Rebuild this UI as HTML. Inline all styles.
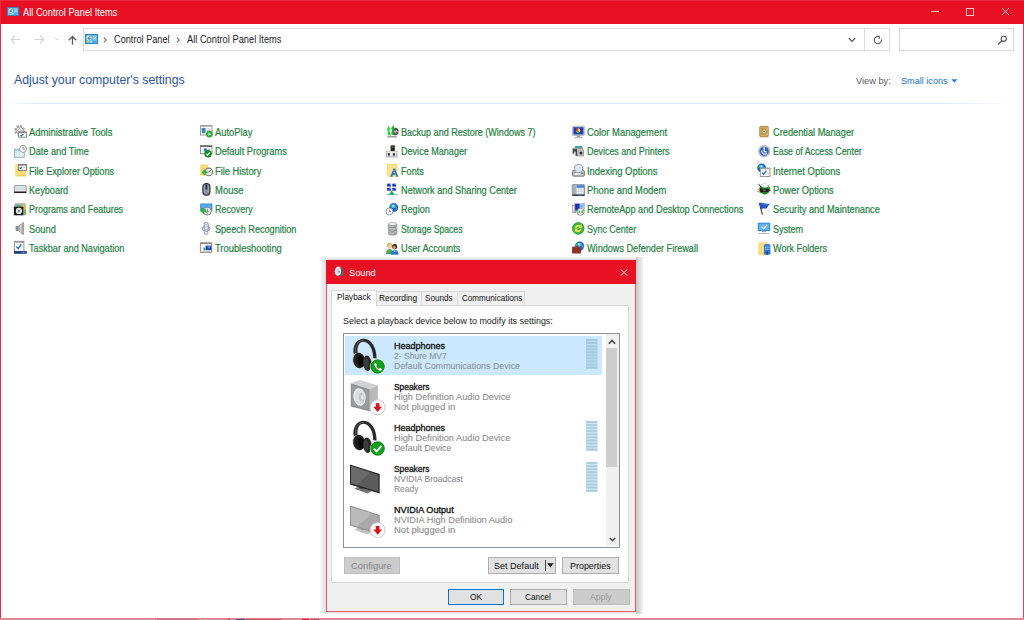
<!DOCTYPE html>
<html><head><meta charset="utf-8"><title>All Control Panel Items</title>
<style>
html,body{margin:0;padding:0;}
body{width:1024px;height:620px;overflow:hidden;background:#fff;position:relative;font-family:"Liberation Sans",sans-serif;}
.abs{position:absolute;}
.t{position:absolute;white-space:pre;line-height:1;transform-origin:0 50%;}
#titlebar{left:0;top:0;width:1024px;height:24px;background:#e81123;}
#win-l{left:0;top:24px;width:1px;height:596px;background:#e9283a;}
#win-r{left:1023px;top:24px;width:1px;height:596px;background:#ea4658;}
#win-b{left:0;top:618px;width:1024px;height:1px;background:#ec7d88;}
#win-b2{left:0;top:619px;width:1024px;height:1px;background:#d0949b;}
#addr{left:83px;top:28px;width:805px;height:21px;border:1px solid #dbdbdb;background:#fff;}
#addr-div{left:864px;top:29px;width:1px;height:21px;background:#d9d9d9;}
#search{left:899px;top:28px;width:113px;height:21px;border:1px solid #d9d9d9;background:#fff;}
#hr{left:6px;top:103px;width:1004px;height:1px;background:linear-gradient(90deg,rgba(226,234,246,0),#e0e8f5 3%,#e0e8f5 94%,rgba(226,234,246,0));}
.ic{position:absolute;width:13px;height:13px;overflow:visible;}
</style></head>
<body>
<div id="titlebar" class="abs"></div>
<div class="abs" style="left:0;top:0;width:1024px;height:1px;background:#e92a3a"></div>
<div class="abs" style="left:0;top:0;width:1px;height:24px;background:#e92a3a"></div>
<div id="win-l" class="abs"></div><div id="win-r" class="abs"></div>
<div id="win-b" class="abs"></div><div id="win-b2" class="abs"></div>
<div class="abs" style="left:157px;top:619px;width:41px;height:1px;background:#b7747c"></div>
<div class="abs" style="left:198px;top:619px;width:9px;height:1px;background:#c9a392"></div>
<div class="abs" style="left:228px;top:619px;width:2px;height:1px;background:#6a5560"></div>
<div class="abs" style="left:236px;top:619px;width:9px;height:1px;background:#3f4f8c"></div>
<div class="abs" style="left:246px;top:619px;width:36px;height:1px;background:#c4606c"></div>
<div class="abs" style="left:302px;top:619px;width:7px;height:1px;background:#e01525"></div>
<div class="abs" style="left:311px;top:619px;width:8px;height:1px;background:#a05a64"></div>

<!-- title icon -->
<svg class="abs" style="left:7px;top:7px" width="12" height="9" viewBox="0 0 12 9"><rect x="0" y="0" width="12" height="9" fill="#62bbf0"/><rect x="0.5" y="0.5" width="11" height="8" fill="none" stroke="#2a86c6" stroke-width="1"/><circle cx="3.7" cy="3.7" r="2.2" fill="#e2f2fc"/><circle cx="3.7" cy="3.9" r="1.3" fill="#3f97dd"/><path d="M3.7 3.7 L3.7 1.5 A2.2 2.2 0 0 1 5.8 3.3 Z" fill="#f2a93b"/><rect x="7.4" y="1.8" width="2.8" height="3.2" fill="#8fd2f8"/><rect x="8.5" y="2" width="1.1" height="0.8" fill="#e8a86a"/><rect x="1.6" y="6.5" width="3.6" height="0.9" fill="#ecc850"/><rect x="5.2" y="6.5" width="1.2" height="0.9" fill="#f4fbff"/><rect x="7" y="6.5" width="3.2" height="0.9" fill="#3d9be0"/></svg>

<!-- window controls -->
<div class="abs" style="left:931px;top:11px;width:8px;height:1px;background:#f8b4ba"></div>
<div class="abs" style="left:966px;top:8px;width:6px;height:6px;border:1px solid #f9c4c9"></div>
<svg class="abs" style="left:1001px;top:7px" width="9" height="9" viewBox="0 0 9 9"><path d="M1 1 L8 8 M8 1 L1 8" stroke="#fbd5d8" stroke-width="1" fill="none"/></svg>

<!-- nav arrows -->
<svg class="abs" style="left:10px;top:34px" width="12" height="11" viewBox="0 0 12 11"><path d="M10.5 5.5 H1.5 M5 1.5 L1.2 5.5 L5 9.5" stroke="#d4d4d4" stroke-width="1.1" fill="none"/></svg>
<svg class="abs" style="left:33px;top:34px" width="12" height="11" viewBox="0 0 12 11"><path d="M1.5 5.5 H10.5 M7 1.5 L10.8 5.5 L7 9.5" stroke="#d4d4d4" stroke-width="1.1" fill="none"/></svg>
<svg class="abs" style="left:54px;top:37px" width="6" height="4" viewBox="0 0 6 4"><path d="M0.8 0.8 L3 3 L5.2 0.8" stroke="#d0d0d0" stroke-width="0.9" fill="none"/></svg>
<svg class="abs" style="left:67px;top:35px" width="11" height="11" viewBox="0 0 11 11"><path d="M5.5 9.8 V1.6 M1.8 5.2 L5.5 1.4 L9.2 5.2" stroke="#5c5c5c" stroke-width="1.35" fill="none"/></svg>

<div id="addr" class="abs"></div><div id="addr-div" class="abs"></div><div id="search" class="abs"></div>
<!-- address icon -->
<svg class="abs" style="left:85px;top:34px" width="13" height="10" viewBox="0 0 13 10"><rect x="0" y="0" width="13" height="10" fill="#62bbf0"/><rect x="0.5" y="0.5" width="12" height="9" fill="none" stroke="#2386cd" stroke-width="1"/><circle cx="4" cy="4" r="2.5" fill="#e2f2fc"/><circle cx="4" cy="4.2" r="1.5" fill="#3f97dd"/><path d="M4 4 L4 1.5 A2.5 2.5 0 0 1 6.4 3.6 Z" fill="#f2a93b"/><rect x="8.2" y="2" width="3" height="3.4" fill="#8fd2f8"/><rect x="9.4" y="2.2" width="1.2" height="0.9" fill="#e8a86a"/><rect x="9" y="3.8" width="1.1" height="0.9" fill="#eef8ff"/><rect x="1.8" y="7.3" width="3.8" height="1" fill="#ecc850"/><rect x="5.6" y="7.3" width="1.3" height="1" fill="#f4fbff"/><rect x="7.6" y="7.3" width="3.6" height="1" fill="#3d9be0"/></svg>
<svg class="abs" style="left:103px;top:37px" width="4" height="6" viewBox="0 0 4 6"><path d="M0.8 0.6 L3.2 3 L0.8 5.4" stroke="#727272" stroke-width="1.15" fill="none"/></svg>
<svg class="abs" style="left:176px;top:37px" width="4" height="6" viewBox="0 0 4 6"><path d="M0.8 0.6 L3.2 3 L0.8 5.4" stroke="#727272" stroke-width="1.15" fill="none"/></svg>
<svg class="abs" style="left:848px;top:37px" width="8" height="6" viewBox="0 0 8 6"><path d="M0.8 1 L4 4.4 L7.2 1" stroke="#555" stroke-width="1.2" fill="none"/></svg>
<svg class="abs" style="left:873px;top:35px" width="10" height="10" viewBox="0 0 10 10"><path d="M5.6 1.6 A3.6 3.6 0 1 0 8.4 4.4" stroke="#555" stroke-width="1.05" fill="none"/><path d="M3.4 1.3 H6.2 V4" stroke="#555" stroke-width="1.05" fill="none"/></svg>
<svg class="abs" style="left:997px;top:35px" width="11" height="10" viewBox="0 0 11 10"><circle cx="6.8" cy="3.8" r="2.6" stroke="#555" stroke-width="1.1" fill="none"/><path d="M4.9 5.8 L1 9.4" stroke="#555" stroke-width="1.3" fill="none"/></svg>

<div id="hr" class="abs"></div>
<svg class="abs" style="left:951px;top:79px" width="7" height="4" viewBox="0 0 7 4"><path d="M0.4 0.3 H6.4 L3.4 3.6 Z" fill="#1a78d6"/></svg>

<span class="t" style="left:29.20px;top:127.94px;font-size:10px;color:#1f7f42;-webkit-text-stroke:0.2px #1f7f42;transform:scaleX(0.9397)">Administrative Tools</span>
<span class="t" style="left:29.20px;top:147.28px;font-size:10px;color:#1f7f42;-webkit-text-stroke:0.2px #1f7f42;transform:scaleX(0.9193)">Date and Time</span>
<span class="t" style="left:29.20px;top:166.64px;font-size:10px;color:#1f7f42;-webkit-text-stroke:0.2px #1f7f42;transform:scaleX(0.9103)">File Explorer Options</span>
<span class="t" style="left:29.20px;top:185.99px;font-size:10px;color:#1f7f42;-webkit-text-stroke:0.2px #1f7f42;transform:scaleX(0.9156)">Keyboard</span>
<span class="t" style="left:29.20px;top:205.34px;font-size:10px;color:#1f7f42;-webkit-text-stroke:0.2px #1f7f42;transform:scaleX(0.8957)">Programs and Features</span>
<span class="t" style="left:29.20px;top:224.69px;font-size:10px;color:#1f7f42;-webkit-text-stroke:0.2px #1f7f42;transform:scaleX(0.9266)">Sound</span>
<span class="t" style="left:29.20px;top:244.03px;font-size:10px;color:#1f7f42;-webkit-text-stroke:0.2px #1f7f42;transform:scaleX(0.9128)">Taskbar and Navigation</span>
<span class="t" style="left:215.20px;top:127.94px;font-size:10px;color:#1f7f42;-webkit-text-stroke:0.2px #1f7f42;transform:scaleX(0.9368)">AutoPlay</span>
<span class="t" style="left:215.20px;top:147.28px;font-size:10px;color:#1f7f42;-webkit-text-stroke:0.2px #1f7f42;transform:scaleX(0.9227)">Default Programs</span>
<span class="t" style="left:215.20px;top:166.64px;font-size:10px;color:#1f7f42;-webkit-text-stroke:0.2px #1f7f42;transform:scaleX(0.9257)">File History</span>
<span class="t" style="left:215.20px;top:185.99px;font-size:10px;color:#1f7f42;-webkit-text-stroke:0.2px #1f7f42;transform:scaleX(0.9495)">Mouse</span>
<span class="t" style="left:215.20px;top:205.34px;font-size:10px;color:#1f7f42;-webkit-text-stroke:0.2px #1f7f42;transform:scaleX(0.8899)">Recovery</span>
<span class="t" style="left:215.20px;top:224.69px;font-size:10px;color:#1f7f42;-webkit-text-stroke:0.2px #1f7f42;transform:scaleX(0.9093)">Speech Recognition</span>
<span class="t" style="left:215.20px;top:244.03px;font-size:10px;color:#1f7f42;-webkit-text-stroke:0.2px #1f7f42;transform:scaleX(0.9363)">Troubleshooting</span>
<span class="t" style="left:401.10px;top:127.94px;font-size:10px;color:#1f7f42;-webkit-text-stroke:0.2px #1f7f42;transform:scaleX(0.9029)">Backup and Restore (Windows 7)</span>
<span class="t" style="left:401.10px;top:147.28px;font-size:10px;color:#1f7f42;-webkit-text-stroke:0.2px #1f7f42;transform:scaleX(0.9064)">Device Manager</span>
<span class="t" style="left:401.10px;top:166.64px;font-size:10px;color:#1f7f42;-webkit-text-stroke:0.2px #1f7f42;transform:scaleX(0.9114)">Fonts</span>
<span class="t" style="left:401.10px;top:185.99px;font-size:10px;color:#1f7f42;-webkit-text-stroke:0.2px #1f7f42;transform:scaleX(0.9177)">Network and Sharing Center</span>
<span class="t" style="left:401.10px;top:205.34px;font-size:10px;color:#1f7f42;-webkit-text-stroke:0.2px #1f7f42;transform:scaleX(0.9084)">Region</span>
<span class="t" style="left:401.10px;top:224.69px;font-size:10px;color:#1f7f42;-webkit-text-stroke:0.2px #1f7f42;transform:scaleX(0.8641)">Storage Spaces</span>
<span class="t" style="left:401.10px;top:244.03px;font-size:10px;color:#1f7f42;-webkit-text-stroke:0.2px #1f7f42;transform:scaleX(0.9196)">User Accounts</span>
<span class="t" style="left:587.10px;top:127.94px;font-size:10px;color:#1f7f42;-webkit-text-stroke:0.2px #1f7f42;transform:scaleX(0.9407)">Color Management</span>
<span class="t" style="left:587.10px;top:147.28px;font-size:10px;color:#1f7f42;-webkit-text-stroke:0.2px #1f7f42;transform:scaleX(0.8952)">Devices and Printers</span>
<span class="t" style="left:587.10px;top:166.64px;font-size:10px;color:#1f7f42;-webkit-text-stroke:0.2px #1f7f42;transform:scaleX(0.9392)">Indexing Options</span>
<span class="t" style="left:587.10px;top:185.99px;font-size:10px;color:#1f7f42;-webkit-text-stroke:0.2px #1f7f42;transform:scaleX(0.9395)">Phone and Modem</span>
<span class="t" style="left:587.10px;top:205.34px;font-size:10px;color:#1f7f42;-webkit-text-stroke:0.2px #1f7f42;transform:scaleX(0.9194)">RemoteApp and Desktop Connections</span>
<span class="t" style="left:587.10px;top:224.69px;font-size:10px;color:#1f7f42;-webkit-text-stroke:0.2px #1f7f42;transform:scaleX(0.8940)">Sync Center</span>
<span class="t" style="left:587.10px;top:244.03px;font-size:10px;color:#1f7f42;-webkit-text-stroke:0.2px #1f7f42;transform:scaleX(0.9119)">Windows Defender Firewall</span>
<span class="t" style="left:772.80px;top:127.94px;font-size:10px;color:#1f7f42;-webkit-text-stroke:0.2px #1f7f42;transform:scaleX(0.9234)">Credential Manager</span>
<span class="t" style="left:772.80px;top:147.28px;font-size:10px;color:#1f7f42;-webkit-text-stroke:0.2px #1f7f42;transform:scaleX(0.8767)">Ease of Access Center</span>
<span class="t" style="left:772.80px;top:166.64px;font-size:10px;color:#1f7f42;-webkit-text-stroke:0.2px #1f7f42;transform:scaleX(0.9430)">Internet Options</span>
<span class="t" style="left:772.80px;top:185.99px;font-size:10px;color:#1f7f42;-webkit-text-stroke:0.2px #1f7f42;transform:scaleX(0.9254)">Power Options</span>
<span class="t" style="left:772.80px;top:205.34px;font-size:10px;color:#1f7f42;-webkit-text-stroke:0.2px #1f7f42;transform:scaleX(0.9237)">Security and Maintenance</span>
<span class="t" style="left:772.80px;top:224.69px;font-size:10px;color:#1f7f42;-webkit-text-stroke:0.2px #1f7f42;transform:scaleX(0.8997)">System</span>
<span class="t" style="left:772.80px;top:244.03px;font-size:10px;color:#1f7f42;-webkit-text-stroke:0.2px #1f7f42;transform:scaleX(0.9109)">Work Folders</span>
<span class="t" style="left:22.90px;top:7.64px;font-size:10px;color:#ffffff;transform:scaleX(0.9280)">All Control Panel Items</span>
<span class="t" style="left:113.80px;top:35.03px;font-size:10px;color:#222222;transform:scaleX(0.9176)">Control Panel</span>
<span class="t" style="left:187.40px;top:35.03px;font-size:10px;color:#222222;transform:scaleX(0.9290)">All Control Panel Items</span>
<span class="t" style="left:13.60px;top:74.43px;font-size:12.6px;color:#2c55a4;transform:scaleX(0.9776)">Adjust your computer's settings</span>
<span class="t" style="left:856.20px;top:76.00px;font-size:9.8px;color:#5a5a5a;transform:scaleX(0.9441)">View by:</span>
<span class="t" style="left:900.60px;top:76.00px;font-size:9.8px;color:#1a6fd0;transform:scaleX(0.9303)">Small icons</span>
<svg class="ic" style="left:14.0px;top:125.40px" width="13" height="13" viewBox="0 0 13 13"><circle cx="5.6" cy="5.4" r="4.3" fill="none" stroke="#9d9d9d" stroke-width="2.2" stroke-dasharray="1.9 1.48"/><circle cx="5.6" cy="5.4" r="3.5" fill="#f6f6f6" stroke="#979797" stroke-width="0.9"/><circle cx="5.6" cy="5.4" r="1.5" fill="#fff" stroke="#a5a5a5" stroke-width="0.7"/><rect x="4.6" y="6.9" width="7.8" height="5.3" fill="#fff" stroke="#7e7e7e" stroke-width="0.9"/><rect x="4.6" y="6.9" width="7.8" height="1.3" fill="#8a8a8a"/><path d="M6.5 10.1 l0.9900000000000001 1.08 l1.8900000000000001 -2.3400000000000003" fill="none" stroke="#1e6fd6" stroke-width="1.1"/></svg>
<svg class="ic" style="left:14.0px;top:144.75px" width="13" height="13" viewBox="0 0 13 13"><rect x="0.4" y="4.2" width="9.8" height="8" fill="#d8eef4" stroke="#8f979c" stroke-width="0.9"/><rect x="0.4" y="4.2" width="9.8" height="2" fill="#9fd0e8"/><path d="M0.6 8 H10 M0.6 10 H10 M3.6 6.2 V12 M6.8 6.2 V12" stroke="#fff" stroke-width="0.8"/><path d="M1 7 h2 v0.9 h-2z M4.2 7 h2 v0.9 h-2z M1 9.2 h2 v0.9 h-2z M4.2 9.2 h2 v0.9 h-2z M7.4 9.2 h2 v0.9 h-2z M1 11 h2 v0.8 h-2z M4.2 11 h2 v0.8 h-2z" fill="#a8dfe9"/><circle cx="9" cy="3.9" r="3.5" fill="#fbfbfb" stroke="#8d8d8d" stroke-width="0.9"/><path d="M9 1.7999999999999998 v2.275 h1.75" fill="none" stroke="#3a66c8" stroke-width="0.7"/></svg>
<svg class="ic" style="left:14.0px;top:164.10px" width="13" height="13" viewBox="0 0 13 13"><rect x="1.4" y="0.3" width="10.6" height="12" rx="0.5" fill="#f8dc77"/><rect x="1.4" y="11.100000000000001" width="10.6" height="1.2" fill="#f3cd58"/><rect x="1.4" y="0.3" width="1.4" height="12" fill="#f9e28c"/><rect x="4.4" y="0.4" width="8" height="6" fill="#fff" stroke="#6f6f6f" stroke-width="0.9"/><rect x="4.4" y="0.4" width="8" height="1.2" fill="#777"/><path d="M5.6 3.6 l0.8800000000000001 0.96 l1.6800000000000002 -2.08" fill="none" stroke="#1e6fd6" stroke-width="1.1"/><path d="M9.2 3.4 h2" stroke="#9aa" stroke-width="0.7"/></svg>
<svg class="ic" style="left:14.0px;top:183.45px" width="13" height="13" viewBox="0 0 13 13"><rect x="0.4" y="2.6" width="11.8" height="7" rx="0.5" fill="#dde1e8" stroke="#7f8595" stroke-width="0.8"/><rect x="0.1" y="8.4" width="12.4" height="1.6" rx="0.4" fill="#1e1e1e"/><path d="M1.6 4.2 H11 M1.6 5.7 H11 M2.6 7.2 H10" stroke="#fff" stroke-width="0.9" stroke-dasharray="1.3 0.4"/><path d="M1.6 4.9 H11 M1.6 6.4 H11" stroke="#b5bccb" stroke-width="0.5"/></svg>
<svg class="ic" style="left:14.0px;top:202.80px" width="13" height="13" viewBox="0 0 13 13"><rect x="0.6" y="0" width="10.8" height="1.7" fill="#b9b9b9"/><rect x="0.4" y="1.6" width="11.6" height="10.5" fill="#9aa0a6"/><rect x="2" y="1.8" width="5.4" height="2" fill="#58b86a"/><rect x="9.4" y="6.6" width="2.6" height="5.5" fill="#5fae4a"/><rect x="9.4" y="6.6" width="1" height="5.5" fill="#b8bcc4"/><circle cx="9.7" cy="4.6" r="2.4" fill="#efc23c"/><rect x="-0.1" y="3.7" width="9.4" height="8.5" rx="0.5" fill="#161616"/><circle cx="4.9" cy="7.9" r="3.1" fill="#ececec"/><circle cx="4.9" cy="7.9" r="2" fill="none" stroke="#cfd3d6" stroke-width="0.8"/><circle cx="4.9" cy="7.9" r="1.05" fill="#6d6d6d"/></svg>
<svg class="ic" style="left:14.0px;top:222.15px" width="13" height="13" viewBox="0 0 13 13"><path d="M2 4.4 H4.4 L9.4 0.4 V12.6 L4.4 8.6 H2 Z" fill="#a9a9a9" stroke="#7c7c7c" stroke-width="0.7"/><path d="M6.8 2.6 V10.4" stroke="#d9d9d9" stroke-width="1.4"/><rect x="2" y="4.4" width="2" height="4.2" fill="#8a8e92"/></svg>
<svg class="ic" style="left:14.0px;top:240.90px" width="13" height="13" viewBox="0 0 13 13"><rect x="0.5" y="0.5" width="9.4" height="10" fill="#fff" stroke="#8c8c8c" stroke-width="0.9"/><rect x="0.5" y="0.5" width="9.4" height="1.2" fill="#9a9a9a"/><rect x="7.6" y="0.4" width="1.6" height="1" fill="#d9534f"/><path d="M2.4 5.6 l1.8 2 l3.2 -4.6" fill="none" stroke="#1e6fd6" stroke-width="1.4"/><rect x="0" y="10" width="12.8" height="2.8" fill="#1f3f7f"/><path d="M7.6 11.4 h4.4" stroke="#8fb0e8" stroke-width="1" stroke-dasharray="0.9 0.6"/></svg>
<svg class="ic" style="left:199.8px;top:125.40px" width="13" height="13" viewBox="0 0 13 13"><rect x="0.4" y="0.6" width="11.6" height="9.4" fill="#fff" stroke="#8b8b8b" stroke-width="0.9"/><rect x="0.4" y="0.6" width="11.6" height="1.4" fill="#b5b5b5"/><rect x="1.8" y="3.2" width="3.6" height="5" fill="#3f8f8a"/><rect x="1.8" y="3.2" width="3.6" height="2.2" fill="#3b78d0"/><path d="M6.6 4 h3.4 M6.6 5.6 h3.4" stroke="#c8c8c8" stroke-width="0.8"/><circle cx="9.4" cy="9.2" r="3.1" fill="#2fb236" stroke="#23982b" stroke-width="0.5"/><path d="M8.5 7.7 L11 9.2 L8.5 10.7 Z" fill="#fff"/></svg>
<svg class="ic" style="left:199.8px;top:144.75px" width="13" height="13" viewBox="0 0 13 13"><rect x="0.4" y="0.6" width="11.6" height="8" fill="#fff" stroke="#8b8b8b" stroke-width="0.9"/><rect x="0.4" y="0.6" width="11.6" height="1.3" fill="#5a5a5a"/><rect x="3.8" y="3.4" width="3" height="3" fill="#2d6fd8"/><rect x="7.6" y="3.6" width="2.6" height="2" fill="#b8c8d8"/><circle cx="8" cy="8.8" r="3.5" fill="#0f8f1f" stroke="#0b7418" stroke-width="0.5"/><path d="M6.2 8.8 l1.3 1.4 l2.4 -2.8" fill="none" stroke="#fff" stroke-width="1.2"/></svg>
<svg class="ic" style="left:199.8px;top:164.10px" width="13" height="13" viewBox="0 0 13 13"><rect x="0.2" y="0.4" width="8" height="10.8" rx="0.5" fill="#f8dc77"/><rect x="0.2" y="10.000000000000002" width="8" height="1.2" fill="#f3cd58"/><circle cx="8.8" cy="7.9" r="3.8" fill="#ececec" stroke="#7c7c7c" stroke-width="1.1"/><path d="M8.8 8.1 L10.8 6 M8.8 8.1 H7.2" stroke="#555" stroke-width="0.8"/><path d="M1.4 8.6 L4.8 5 V7 C6.6 6.6 7.8 7.6 7.4 10 C6.8 9 6 8.8 4.8 9.2 V11.6 Z" fill="#2fb53c"/></svg>
<svg class="ic" style="left:199.8px;top:183.45px" width="13" height="13" viewBox="0 0 13 13"><rect x="2.9" y="0.5" width="7" height="11.8" rx="3.5" fill="#8891aa" stroke="#1d1d1d" stroke-width="1.1"/><rect x="5.6" y="1.2" width="1.6" height="5.6" rx="0.8" fill="#20232c"/><path d="M4.4 3.2 V9.6 M8.4 3.2 V9.6" stroke="#a9b1c8" stroke-width="0.8"/></svg>
<svg class="ic" style="left:199.8px;top:202.80px" width="13" height="13" viewBox="0 0 13 13"><rect x="0.2" y="0.5" width="12.2" height="7.4" fill="#2f8ddd"/><rect x="1.2" y="1.5" width="10.2" height="3.6" fill="#5aabec"/><circle cx="7.3" cy="8.2" r="4" fill="#ebebeb" stroke="#858585" stroke-width="1"/><path d="M7.3 5.6 V8.4 H9.2 M7.3 8.4 V11" stroke="#6a6a6a" stroke-width="0.7" fill="none"/><path d="M0.2 8.2 L4 4.4 V6.4 C6 6 7.2 7.2 6.6 10 C6 8.9 5.2 8.6 4 9 V11.4 Z" fill="#2fb53c"/></svg>
<svg class="ic" style="left:199.8px;top:222.15px" width="13" height="13" viewBox="0 0 13 13"><ellipse cx="6.2" cy="6.6" rx="3.9" ry="2.5" fill="#eef1f8" stroke="#7785ad" stroke-width="0.9"/><rect x="4.1" y="0.4" width="4.2" height="9" rx="2" fill="#f7f9fd" stroke="#7785ad" stroke-width="0.9"/><path d="M4.4 2.4 H8 M4.4 4.2 H8 M4.4 6 H8 M4.4 7.6 H8" stroke="#8f9bbf" stroke-width="0.6"/><rect x="4.6" y="9.3" width="3.2" height="3.1" rx="1" fill="#f2f4fa" stroke="#7785ad" stroke-width="0.8"/></svg>
<svg class="ic" style="left:199.8px;top:241.50px" width="13" height="13" viewBox="0 0 13 13"><rect x="0.4" y="0.8" width="11.3" height="9.6" fill="#fff" stroke="#858585" stroke-width="0.9"/><rect x="0.4" y="0.8" width="11.3" height="1.3" fill="#8d8d8d"/><rect x="5.6" y="3.6" width="5.8" height="4.6" fill="#1b3fc0"/><rect x="7.6" y="4.2" width="2.6" height="2" fill="#5f8cf0"/><rect x="3.4" y="5.6" width="2" height="2.8" fill="#3aa04a"/><path d="M1.6 9.4 h9" stroke="#b9b9b9" stroke-width="0.8"/></svg>
<svg class="ic" style="left:386.0px;top:125.40px" width="13" height="13" viewBox="0 0 13 13"><ellipse cx="9.3" cy="6.6" rx="3.3" ry="3.8" fill="#555555"/><circle cx="9.9" cy="6.6" r="1.7" fill="#d0d0d0"/><circle cx="10.4" cy="7.4" r="0.8" fill="#d23a3a"/><circle cx="9.4" cy="5.6" r="0.7" fill="#3a78d0"/><path d="M1.8 11 H10.4 L11.4 12.6 H0.8 Z" fill="#a0a0a0"/><path d="M0.4 5.2 L2.6 1 L4.6 4 L3.6 4.2 C3.8 7 4.2 8.8 5.4 10.4 L2.4 10.6 C1.6 8.8 1.4 7 1.6 5 Z" fill="#36d448"/><path d="M4.8 3.8 L7.4 0 L9 3.8 L7.8 3.6 C8 6.4 7.6 8.6 6.6 10.6 L5.2 8.6 C5.8 7 6 5.4 5.8 3.8 Z" fill="#25b738"/></svg>
<svg class="ic" style="left:386.0px;top:144.75px" width="13" height="13" viewBox="0 0 13 13"><rect x="4.6" y="0.4" width="4.2" height="6" fill="#1c1c1c"/><rect x="5.6" y="1.8" width="2.2" height="0.9" fill="#35c04a"/><rect x="0.4" y="6.2" width="10.6" height="5.8" fill="#dcdcdc" stroke="#9a9a9a" stroke-width="0.7"/><rect x="0.8" y="6.6" width="9.8" height="1.1" fill="#f4f4f4"/><ellipse cx="2.9" cy="9.4" rx="1" ry="1.4" fill="#2a2a2a"/><ellipse cx="7.9" cy="9.4" rx="1" ry="1.4" fill="#2a2a2a"/><rect x="4.6" y="8.2" width="1.8" height="2.6" fill="#f4f4f4"/><rect x="0.8" y="11" width="9.8" height="0.7" fill="#b8bcc8"/></svg>
<svg class="ic" style="left:386.0px;top:164.10px" width="13" height="13" viewBox="0 0 13 13"><rect x="1.4" y="0.3" width="9.6" height="12" rx="0.6" fill="#fbe28c" stroke="#f4cd55" stroke-width="0.8"/><rect x="3.4" y="1.6" width="0.7" height="0.7" fill="#fff6d0"/><path d="M4.4 12.5 L7.5 4.6 H9 L12.1 12.5 H10.3 L9.7 10.7 H6.9 L6.3 12.5 Z M7.4 9.3 H9.2 L8.3 6.8 Z" fill="#1d6fd4"/><path d="M4.2 11.7 H6.9 V12.6 H4.2 Z M9.7 11.7 H12.4 V12.6 H9.7 Z" fill="#35a86a"/><circle cx="8" cy="6.6" r="0.5" fill="#e8d060"/><circle cx="9.6" cy="10.2" r="0.5" fill="#e8d060"/></svg>
<svg class="ic" style="left:386.0px;top:183.45px" width="13" height="13" viewBox="0 0 13 13"><rect x="0.7" y="0.3" width="4.6" height="3.6" fill="#cdd1d8"/><rect x="1.2" y="0.8" width="3.6" height="2.6" fill="#1533b8"/><path d="M2.9000000000000004 0.8999999999999999 h1.8 v1.2 z" fill="#9db7f5"/><rect x="0.7" y="4.4" width="4.6" height="3.6" fill="#cdd1d8"/><rect x="1.2" y="4.9" width="3.6" height="2.6" fill="#1533b8"/><path d="M2.9000000000000004 5.0 h1.8 v1.2 z" fill="#9db7f5"/><rect x="5.9" y="0.3" width="4.6" height="3.6" fill="#cdd1d8"/><rect x="6.4" y="0.8" width="3.6" height="2.6" fill="#1533b8"/><path d="M8.100000000000001 0.8999999999999999 h1.8 v1.2 z" fill="#9db7f5"/><rect x="5.9" y="4.4" width="4.6" height="3.6" fill="#cdd1d8"/><rect x="6.4" y="4.9" width="3.6" height="2.6" fill="#1533b8"/><path d="M8.100000000000001 5.0 h1.8 v1.2 z" fill="#9db7f5"/><path d="M0 11.5 H12.4" stroke="#b4b4b4" stroke-width="0.9"/><path d="M5.7 7.3 L8.7 12 H2.7 Z" fill="#16b56e"/></svg>
<svg class="ic" style="left:386.0px;top:202.80px" width="13" height="13" viewBox="0 0 13 13"><circle cx="7.7" cy="4.5" r="4.3" fill="#1c62d6"/><ellipse cx="7.485" cy="3.21" rx="2.15" ry="2.064" fill="#58b4fb"/><ellipse cx="7.184" cy="2.694" rx="0.946" ry="0.86" fill="#c8e8ff"/><path d="M4.045 3.425 q0.43 -1.935 2.15 -2.365 q0.215 1.72 -0.6449999999999999 2.5799999999999996 q-0.86 1.505 -1.505 -0.215 z" fill="#2fbf3a"/><path d="M9.42 3.21 q1.935 0.43 1.72 2.365 q-1.72 1.505 -1.72 -2.365 z" fill="#35c440"/><circle cx="7.7" cy="4.5" r="4.3" fill="none" stroke="#2a5fae" stroke-width="0.5"/><circle cx="3.4" cy="8.5" r="3.5" fill="#fbfbfb" stroke="#8d8d8d" stroke-width="0.9"/><path d="M3.4 6.4 v2.275 h1.75" fill="none" stroke="#3a66c8" stroke-width="0.7"/></svg>
<svg class="ic" style="left:386.0px;top:222.15px" width="13" height="13" viewBox="0 0 13 13"><path d="M2.4 9.2 v2.4 a4.2 1.5 0 0 0 8.4 0 v-2.4" fill="#b9b9b9" stroke="#5e5e5e" stroke-width="0.55"/><ellipse cx="6.6" cy="9.2" rx="4.2" ry="1.5" fill="#f4f4f4" stroke="#6a6a6a" stroke-width="0.5"/><rect x="8.2" y="11.5" width="1.6" height="0.8" fill="#39b54a"/><path d="M2.4 5.6 v2.4 a4.2 1.5 0 0 0 8.4 0 v-2.4" fill="#b9b9b9" stroke="#5e5e5e" stroke-width="0.55"/><ellipse cx="6.6" cy="5.6" rx="4.2" ry="1.5" fill="#f4f4f4" stroke="#6a6a6a" stroke-width="0.5"/><rect x="8.2" y="7.8999999999999995" width="1.6" height="0.8" fill="#39b54a"/><path d="M2.4 2 v2.4 a4.2 1.5 0 0 0 8.4 0 v-2.4" fill="#b9b9b9" stroke="#5e5e5e" stroke-width="0.55"/><ellipse cx="6.6" cy="2" rx="4.2" ry="1.5" fill="#f4f4f4" stroke="#6a6a6a" stroke-width="0.5"/><rect x="8.2" y="4.3" width="1.6" height="0.8" fill="#39b54a"/></svg>
<svg class="ic" style="left:386.0px;top:241.50px" width="13" height="13" viewBox="0 0 13 13"><ellipse cx="3.6" cy="3.6" rx="2.6" ry="2.8" fill="#d8b060"/><ellipse cx="3.8" cy="4.2" rx="1.7" ry="2" fill="#f2cfa2"/><path d="M0 12 C0 8.4 1.6 7 3.6 7 C5.6 7 7 8.4 7 12 Z" fill="#55a850"/><ellipse cx="8.6" cy="4.6" rx="2.5" ry="2.7" fill="#2a1c14"/><ellipse cx="8.2" cy="5.4" rx="1.7" ry="2" fill="#c98e68"/><path d="M4.6 12.8 C4.6 9.4 6.4 8 8.6 8 C10.8 8 12.6 9.4 12.6 12.8 Z" fill="#2f78c8"/><path d="M7.4 8.4 L8.4 10 L9.6 8.4 Z" fill="#e9eef5"/></svg>
<svg class="ic" style="left:572.0px;top:126.00px" width="13" height="13" viewBox="0 0 13 13"><rect x="0.4" y="0.2" width="12" height="9.2" rx="0.6" fill="#b9bdc2" stroke="#9a9ea4" stroke-width="0.5"/><rect x="1.5" y="1.3" width="9.8" height="7" fill="#1a3cc4"/><circle cx="6" cy="4.6" r="2.3" fill="#e5372c"/><path d="M6 4.6 L6 2.3 A2.3 2.3 0 0 1 8.3 4.6 A2.3 2.3 0 0 1 7.2 6.6 Z" fill="#f3d33a"/><path d="M6 4.6 L7.2 6.6 A2.3 2.3 0 0 1 3.9 5.6 Z" fill="#3cc04a"/><rect x="4.6" y="9.4" width="3.6" height="1.6" fill="#9b9fa5"/><rect x="2.4" y="11" width="8" height="1.2" rx="0.5" fill="#b4b8bd"/></svg>
<svg class="ic" style="left:572.0px;top:144.75px" width="13" height="13" viewBox="0 0 13 13"><rect x="2.8" y="1" width="7.4" height="1.9" fill="#2b8fe0"/><rect x="5.4" y="1" width="2.2" height="1.9" fill="#3bb54a"/><rect x="8.8" y="1.5" width="1.6" height="1.4" fill="#56b04a"/><path d="M0.6 3.8 H5 V10.4 H3.6 V6.4 H2.2 V8.8 H0.6 Z" fill="#3c3c3c"/><rect x="0.3" y="3" width="11" height="1.3" fill="#9b9b9b"/><rect x="5.8" y="5" width="5.9" height="6" fill="#c6c6c6" stroke="#8e8e8e" stroke-width="0.7"/><circle cx="9" cy="8" r="1.5" fill="#2a2d3a"/><rect x="3.6" y="9.4" width="2" height="1.6" fill="#5a5a5a"/></svg>
<svg class="ic" style="left:572.0px;top:164.10px" width="13" height="13" viewBox="0 0 13 13"><rect x="0.5" y="6.6" width="11.9" height="5.6" rx="0.9" fill="#bfc2c5" stroke="#6f7377" stroke-width="0.9"/><rect x="2.6" y="8.8" width="6" height="1.9" fill="#eef2f8"/><rect x="9.2" y="8.6" width="1.9" height="1.4" fill="#35b04a"/><path d="M4 7.2 L1.8 9.4" stroke="#8a8e92" stroke-width="1.3"/><circle cx="6.6" cy="4.5" r="4.1" fill="#d3e9fb" stroke="#92979c" stroke-width="1"/><path d="M4.4 3.8 A2.6 2.6 0 0 1 7.6 2.2" stroke="#fff" stroke-width="0.9" fill="none"/></svg>
<svg class="ic" style="left:572.0px;top:184.15px" width="13" height="13" viewBox="0 0 13 13"><rect x="0.3" y="0.6" width="12.2" height="11" rx="0.6" fill="#c6cdd5" stroke="#7a8088" stroke-width="0.8"/><rect x="0.8" y="1" width="3" height="10" fill="#a4adb8"/><rect x="4.6" y="1.4" width="7.4" height="2.2" fill="#2f82dc"/><path d="M5 5 H11.8 M5 6.8 H11.8 M5 8.6 H11.8" stroke="#fff" stroke-width="1.1" stroke-dasharray="1.4 0.8"/><rect x="0.3" y="10.4" width="12.2" height="1.6" fill="#3a3f46"/><rect x="6" y="10.2" width="4" height="1" fill="#5b8fd8"/></svg>
<svg class="ic" style="left:572.0px;top:202.80px" width="13" height="13" viewBox="0 0 13 13"><rect x="0.4" y="2.6" width="3" height="7" fill="#f3f3f3" stroke="#8f8f8f" stroke-width="0.7"/><rect x="2.7" y="0.5" width="9.6" height="7.4" fill="#d8dde4" stroke="#9aa0a8" stroke-width="0.6"/><rect x="3.1" y="0.9" width="4.6" height="6.6" fill="#1733b5"/><rect x="7.7" y="1.4" width="4.1" height="3.2" fill="#79b2ee"/><rect x="1.4" y="8.4" width="3" height="1.2" fill="#9a9a9a"/><circle cx="8.6" cy="8.8" r="3.5" fill="#f6f6f6" stroke="#838383" stroke-width="0.9"/><path d="M6.5 7 L8.5 8.8 L6.5 10.6 Z M10.7 7 L8.7 8.8 L10.7 10.6 Z" fill="#2fae3c"/></svg>
<svg class="ic" style="left:572.0px;top:222.15px" width="13" height="13" viewBox="0 0 13 13"><circle cx="6.2" cy="6.4" r="6.1" fill="#3fb63f"/><circle cx="6.2" cy="6.4" r="5.7" fill="none" stroke="#2f9e33" stroke-width="0.7"/><path d="M2.8 6 A3.6 3.6 0 0 1 8.6 3.6 L9.6 2.6 V6 H6.2 L7.4 4.8 A2.2 2.2 0 0 0 4.4 6 Z" fill="#f6e75a"/><path d="M9.6 6.8 A3.6 3.6 0 0 1 3.8 9.2 L2.8 10.2 V6.8 H6.2 L5 8 A2.2 2.2 0 0 0 8 6.8 Z" fill="#f6e75a"/></svg>
<svg class="ic" style="left:572.0px;top:241.50px" width="13" height="13" viewBox="0 0 13 13"><circle cx="7.6" cy="4.1" r="4.4" fill="#1c62d6"/><ellipse cx="7.38" cy="2.7799999999999994" rx="2.2" ry="2.112" fill="#58b4fb"/><ellipse cx="7.071999999999999" cy="2.252" rx="0.9680000000000001" ry="0.8800000000000001" fill="#c8e8ff"/><path d="M3.8599999999999994 2.9999999999999996 q0.44000000000000006 -1.9800000000000002 2.2 -2.4200000000000004 q0.22000000000000003 1.7600000000000002 -0.66 2.64 q-0.8800000000000001 1.54 -1.54 -0.22000000000000003 z" fill="#2fbf3a"/><path d="M9.36 2.7799999999999994 q1.9800000000000002 0.44000000000000006 1.7600000000000002 2.4200000000000004 q-1.7600000000000002 1.54 -1.7600000000000002 -2.4200000000000004 z" fill="#35c440"/><circle cx="7.6" cy="4.1" r="4.4" fill="none" stroke="#2a5fae" stroke-width="0.5"/><rect x="0.1" y="4.6" width="8.9" height="6.6" fill="#9c3a2b"/><path d="M0.1 6.8 H9 M0.1 9 H9 M3 4.6 V6.8 M6.2 4.6 V6.8 M1.6 6.8 V9 M4.8 6.8 V9 M7.8 6.8 V9 M3 9 V11.2 M6.2 9 V11.2" stroke="#6e2419" stroke-width="0.45"/><rect x="0.1" y="10.7" width="8.9" height="0.6" fill="#7a2a1e"/></svg>
<svg class="ic" style="left:757.9px;top:125.40px" width="13" height="13" viewBox="0 0 13 13"><rect x="1.8" y="1.4" width="8.4" height="10.4" rx="0.8" fill="#c9a152" stroke="#a77f33" stroke-width="0.9"/><rect x="2.9" y="2.5" width="6.2" height="8.2" fill="#c39a4a" stroke="#d9b870" stroke-width="0.5"/><circle cx="6.2" cy="6.6" r="2" fill="#e8e2d2" stroke="#9a8a60" stroke-width="0.5"/><circle cx="6.2" cy="6.6" r="0.8" fill="#b5653a"/><circle cx="5" cy="5.8" r="0.5" fill="#3aa04a"/><rect x="8.7" y="3.4" width="0.8" height="1.3" fill="#efe3bd"/><rect x="8.7" y="8.6" width="0.8" height="1.3" fill="#efe3bd"/></svg>
<svg class="ic" style="left:757.9px;top:144.75px" width="13" height="13" viewBox="0 0 13 13"><circle cx="6.2" cy="6.3" r="6" fill="#a2a3af"/><circle cx="6.2" cy="6.3" r="5.4" fill="none" stroke="#c9cad3" stroke-width="0.8"/><circle cx="6.2" cy="6.3" r="4.4" fill="#2a59d2"/><path d="M6.2 3 V6.6 H8.6 M3.6 5.6 C3.6 8.2 5.2 9.3 7 9.1 L8.4 8.8 " fill="none" stroke="#fff" stroke-width="1.2"/><circle cx="6.2" cy="3.1" r="0.9" fill="#fff"/><path d="M8 7.4 L9.2 9.4" stroke="#fff" stroke-width="1"/></svg>
<svg class="ic" style="left:757.9px;top:164.10px" width="13" height="13" viewBox="0 0 13 13"><circle cx="3.7" cy="4.0" r="4.2" fill="#1c62d6"/><ellipse cx="3.49" cy="2.74" rx="2.1" ry="2.016" fill="#58b4fb"/><ellipse cx="3.196" cy="2.2359999999999998" rx="0.924" ry="0.8400000000000001" fill="#c8e8ff"/><path d="M0.13000000000000034 2.95 q0.42000000000000004 -1.8900000000000001 2.1 -2.3100000000000005 q0.21000000000000002 1.6800000000000002 -0.63 2.52 q-0.8400000000000001 1.47 -1.47 -0.21000000000000002 z" fill="#2fbf3a"/><path d="M5.380000000000001 2.74 q1.8900000000000001 0.42000000000000004 1.6800000000000002 2.3100000000000005 q-1.6800000000000002 1.47 -1.6800000000000002 -2.3100000000000005 z" fill="#35c440"/><circle cx="3.7" cy="4.0" r="4.2" fill="none" stroke="#2a5fae" stroke-width="0.5"/><rect x="2.3" y="4.1" width="9.7" height="8.4" fill="#fff" stroke="#8a8a8a" stroke-width="0.9"/><rect x="2.3" y="4.1" width="9.7" height="1.3" fill="#a2a2a2"/><path d="M4.1 8.6 l1.6 1.8 l2.6 -3.8" fill="none" stroke="#1e6fd6" stroke-width="1.4"/><path d="M8.9 9.9 h2.2" stroke="#9aa" stroke-width="0.8"/></svg>
<svg class="ic" style="left:757.9px;top:183.45px" width="13" height="13" viewBox="0 0 13 13"><circle cx="6.8" cy="6" r="5.4" fill="#2fa836"/><ellipse cx="6.8" cy="2.5" rx="3.7" ry="1.9" fill="#eef6ee"/><path d="M3 9.6 Q6.8 13 10.6 9.6 Z" fill="#1f8a2a"/><path d="M1.6 5 L4.4 5.4 H9.2 C10.8 5.4 11.2 6.4 11.2 7.3 C11.2 8.4 10.6 9.2 9.2 9.2 H4.4 L1.6 9.8 Z" fill="#1f1f1f"/><rect x="5.2" y="6.5" width="2.6" height="1.6" fill="#6a6a6a"/><path d="M-0.6 6.3 H1.8 M-0.6 8.6 H1.8" stroke="#e8922c" stroke-width="1"/><path d="M11 7.3 H12.6" stroke="#222" stroke-width="0.9"/><path d="M0.6 0.8 L3.6 5.2" stroke="#262626" stroke-width="0.9"/></svg>
<svg class="ic" style="left:757.9px;top:202.30px" width="13" height="13" viewBox="0 0 13 13"><path d="M1.4 1 L4.4 12.6" stroke="#474747" stroke-width="1.2"/><path d="M1.6 1 C4 -0.2 6.4 2.2 11.8 1.8 C10.4 3.4 9.6 5.4 8.4 6.8 C6.4 6.2 4.6 6.2 3 7.2 Z" fill="#2253c4"/><path d="M3 2.2 C5 1.6 7 3.2 9.6 3" stroke="#4f7fe0" stroke-width="0.8" fill="none"/></svg>
<svg class="ic" style="left:757.9px;top:222.15px" width="13" height="13" viewBox="0 0 13 13"><rect x="-0.2" y="0.7" width="12.4" height="8.3" fill="#2e8be2"/><rect x="0.8" y="1.7" width="10.4" height="6.3" fill="#62b1f2"/><path d="M3.6 4.6 l2 2 l3.4 -3.6" fill="none" stroke="#fff" stroke-width="1.2"/><rect x="3.8" y="9" width="4.4" height="1.2" fill="#a9adb2"/><rect x="0.4" y="10.9" width="11.2" height="1" rx="0.4" fill="#aab4c4"/></svg>
<svg class="ic" style="left:757.9px;top:241.50px" width="13" height="13" viewBox="0 0 13 13"><rect x="0.4" y="0.4" width="9.4" height="12" rx="0.5" fill="#f8dc77"/><rect x="0.4" y="11.200000000000001" width="9.4" height="1.2" fill="#f3cd58"/><rect x="0.4" y="0.4" width="1.2" height="12" fill="#f9e28c"/><rect x="6" y="2.8" width="6.4" height="9.8" fill="#2e7bd9"/><rect x="6.8" y="2.2" width="4.8" height="0.9" fill="#2e7bd9"/><path d="M7.2 4.6 h1 v1.2 h-1z M8.8 4.6 h1 v1.2 h-1z M10.4 4.6 h1 v1.2 h-1z M7.2 6.8 h1 v1.2 h-1z M8.8 6.8 h1 v1.2 h-1z M10.4 6.8 h1 v1.2 h-1z" fill="#a8d2f8"/><rect x="8.4" y="9.6" width="1.8" height="3" fill="#173f86"/></svg>

<div id="dlg" class="abs" style="left:326px;top:260px;width:310px;height:352px;background:#f0f0f0;">
<style>
#dlg .b{position:absolute;box-sizing:border-box;}
#dlg .btn{position:absolute;box-sizing:border-box;height:16.4px;background:#e1e1e1;border:1px solid #adadad;}
#dlg .dis{background:#cccccc;border:1px solid #bfbfbf;}
#dlg .tab{position:absolute;box-sizing:border-box;top:31.3px;height:14px;background:#f0f0f0;border:1px solid #d9d9d9;border-bottom:none;}
.m{position:absolute;left:260.2px;width:11.4px;height:30.6px;background:repeating-linear-gradient(180deg,#a4cce2 0,#a4cce2 2.1px,#c3e0f0 2.1px,#c3e0f0 3.06px);}
</style>
<div class="b" style="left:310px;top:-3px;width:7px;height:357px;background:linear-gradient(90deg,rgba(0,0,0,.21),rgba(0,0,0,.05))"></div>
<div class="b" style="left:-5px;top:-3px;width:5px;height:357px;background:linear-gradient(270deg,rgba(0,0,0,.12),rgba(0,0,0,.05))"></div>
<div class="b" style="left:0;top:-3px;width:310px;height:3px;background:linear-gradient(0deg,rgba(0,0,0,.16),rgba(0,0,0,.03))"></div>
<div class="b" style="left:0;top:352px;width:310px;height:2px;background:linear-gradient(180deg,rgba(0,0,0,.13),rgba(0,0,0,.03))"></div>
<div class="b" style="left:0;top:0;width:310px;height:24px;background:#e81123"></div>
<div class="b" style="left:0;top:24px;width:1px;height:328px;background:#e85c6a"></div>
<div class="b" style="left:309px;top:24px;width:1px;height:328px;background:#e85c6a"></div>
<div class="b" style="left:0;top:351px;width:310px;height:1px;background:#e85c6a"></div>
<!-- sound icon -->
<svg class="b" style="left:8px;top:6px" width="11" height="11" viewBox="0 0 11 11"><ellipse cx="4.6" cy="5.4" rx="4.1" ry="4.9" fill="#bfc3c6"/><ellipse cx="6.6" cy="5.8" rx="3.4" ry="4.4" fill="#5a5f63"/><ellipse cx="4.2" cy="5.2" rx="2.9" ry="3.9" fill="#e4e7e9"/><ellipse cx="4.3" cy="5.3" rx="1.5" ry="2.1" fill="#c2c9d2"/><ellipse cx="4.8" cy="5.6" rx="0.6" ry="0.9" fill="#9aa3ad"/></svg>
<svg class="b" style="left:293.5px;top:8.5px" width="8" height="7" viewBox="0 0 8 7"><path d="M0.6 0.5 L7.4 6.5 M7.4 0.5 L0.6 6.5" stroke="#fbd9dc" stroke-width="1" fill="none"/></svg>

<!-- tab panel -->
<div class="b" style="left:5px;top:45px;width:298px;height:278px;background:#fff;border:1px solid #d9d9d9"></div>
<div class="tab" style="left:51px;width:45px;border-left:none"></div>
<div class="tab" style="left:95.1px;width:36.9px"></div>
<div class="tab" style="left:131px;width:68px"></div>
<div class="b" style="left:5px;top:29.6px;width:46px;height:16.6px;background:#fff;border:1px solid #d9d9d9;border-bottom:none"></div>

<!-- list box -->
<div class="b" style="left:17.3px;top:73px;width:276.6px;height:215px;background:#fff;border:1px solid #8b909b;overflow:hidden"></div>
<div class="b" style="left:18.5px;top:76px;width:257.4px;height:39.4px;background:#cce8ff"></div>
<!-- scrollbar -->
<div class="b" style="left:279.8px;top:74px;width:13.1px;height:212.4px;background:#f0f0f0"></div>
<div class="b" style="left:280px;top:87.7px;width:11.2px;height:119px;background:#cdcdcd"></div>
<svg class="b" style="left:282px;top:79px" width="8" height="6" viewBox="0 0 8 6"><path d="M0.9 4.8 L4 1.4 L7.1 4.8" stroke="#404040" stroke-width="1.5" fill="none"/></svg>
<svg class="b" style="left:283px;top:276.5px" width="7" height="5" viewBox="0 0 7 5"><path d="M0.9 0.9 L3.5 3.7 L6.1 0.9" stroke="#404040" stroke-width="1.4" fill="none"/></svg>
<!-- meters -->
<svg class="b" style="left:260.2px;top:79.4px" width="11.4" height="30.6" viewBox="0 0 11.4 30.6"><rect width="11.4" height="30" fill="#c0def0"/><rect x="0" y="0.00" width="11.4" height="2.15" fill="#a2cbe2"/><rect x="0" y="3.06" width="11.4" height="2.15" fill="#a2cbe2"/><rect x="0" y="6.12" width="11.4" height="2.15" fill="#a2cbe2"/><rect x="0" y="9.18" width="11.4" height="2.15" fill="#a2cbe2"/><rect x="0" y="12.24" width="11.4" height="2.15" fill="#a2cbe2"/><rect x="0" y="15.30" width="11.4" height="2.15" fill="#a2cbe2"/><rect x="0" y="18.36" width="11.4" height="2.15" fill="#a2cbe2"/><rect x="0" y="21.42" width="11.4" height="2.15" fill="#a2cbe2"/><rect x="0" y="24.48" width="11.4" height="2.15" fill="#a2cbe2"/><rect x="0" y="27.54" width="11.4" height="2.15" fill="#a2cbe2"/></svg>
<svg class="b" style="left:260.2px;top:161.4px" width="11.4" height="30.6" viewBox="0 0 11.4 30.6"><rect width="11.4" height="30" fill="#dcebf3"/><rect x="0" y="0.00" width="11.4" height="2.15" fill="#a9cfe0"/><rect x="0" y="3.06" width="11.4" height="2.15" fill="#a9cfe0"/><rect x="0" y="6.12" width="11.4" height="2.15" fill="#a9cfe0"/><rect x="0" y="9.18" width="11.4" height="2.15" fill="#a9cfe0"/><rect x="0" y="12.24" width="11.4" height="2.15" fill="#a9cfe0"/><rect x="0" y="15.30" width="11.4" height="2.15" fill="#a9cfe0"/><rect x="0" y="18.36" width="11.4" height="2.15" fill="#a9cfe0"/><rect x="0" y="21.42" width="11.4" height="2.15" fill="#a9cfe0"/><rect x="0" y="24.48" width="11.4" height="2.15" fill="#a9cfe0"/><rect x="0" y="27.54" width="11.4" height="2.15" fill="#a9cfe0"/></svg>
<svg class="b" style="left:260.2px;top:202.4px" width="11.4" height="30.6" viewBox="0 0 11.4 30.6"><rect width="11.4" height="30" fill="#dcebf3"/><rect x="0" y="0.00" width="11.4" height="2.15" fill="#a9cfe0"/><rect x="0" y="3.06" width="11.4" height="2.15" fill="#a9cfe0"/><rect x="0" y="6.12" width="11.4" height="2.15" fill="#a9cfe0"/><rect x="0" y="9.18" width="11.4" height="2.15" fill="#a9cfe0"/><rect x="0" y="12.24" width="11.4" height="2.15" fill="#a9cfe0"/><rect x="0" y="15.30" width="11.4" height="2.15" fill="#a9cfe0"/><rect x="0" y="18.36" width="11.4" height="2.15" fill="#a9cfe0"/><rect x="0" y="21.42" width="11.4" height="2.15" fill="#a9cfe0"/><rect x="0" y="24.48" width="11.4" height="2.15" fill="#a9cfe0"/><rect x="0" y="27.54" width="11.4" height="2.15" fill="#a9cfe0"/></svg>
<svg width="0" height="0" style="position:absolute"><defs>
<g id="hp">
  <path d="M5.7 19.6 C4.2 10.2 8.8 3.7 15.8 3.8 C23.4 3.9 28.6 12.5 28.6 23.6 L25.2 23.2 C25.1 14.2 21.2 7 15.8 6.8 C11.4 6.7 8.6 11.4 9.8 18.4 Z" fill="#2a2a2a"/>
  <path d="M7.7 17 C7 10.8 10.2 5.6 15.4 5.3" fill="none" stroke="#6a6a6a" stroke-width="0.8"/>
  <ellipse cx="10.3" cy="25.3" rx="5.9" ry="7.7" fill="#c4c4c4" transform="rotate(-8 10.3 25.3)"/>
  <ellipse cx="11.2" cy="25.5" rx="6" ry="7.7" fill="#1e1e1e" transform="rotate(-8 11.2 25.5)"/>
  <ellipse cx="13.2" cy="25.9" rx="3.5" ry="5.6" fill="#0b0b0b" transform="rotate(-8 13.2 25.9)"/>
  <ellipse cx="21.6" cy="28.2" rx="3.6" ry="6.6" fill="#dedede" transform="rotate(-6 21.6 28.2)"/>
  <ellipse cx="19.3" cy="28.2" rx="4.3" ry="7.8" fill="#272727" transform="rotate(-6 19.3 28.2)"/>
  <ellipse cx="18.2" cy="28.2" rx="2.5" ry="6" fill="#3b3b3b" transform="rotate(-6 18.2 28.2)"/>
</g>
<g id="bphone">
  <circle cx="29.6" cy="31.5" r="7.7" fill="#ffffff"/>
  <circle cx="29.6" cy="31.5" r="7" fill="#13a01e"/>
  <circle cx="29.6" cy="31.5" r="6.6" fill="none" stroke="#0d8717" stroke-width="0.8"/>
  <path d="M26.6 28.4 C27.4 27.6 28 27.9 28.4 28.7 L28.8 29.6 C29 30.2 28.5 30.5 28.3 30.9 C28.8 32.3 29.9 33.3 31.2 33.7 C31.6 33.3 32 32.9 32.6 33.2 L33.4 33.7 C34 34.1 34.1 34.7 33.4 35.3 C32.5 36.1 30.5 35.6 28.6 33.7 C26.8 31.8 25.9 29.3 26.6 28.4 Z" fill="#ffffff"/>
</g>
<g id="bcheck">
  <circle cx="29.6" cy="31.5" r="7.7" fill="#ffffff"/>
  <circle cx="29.6" cy="31.5" r="7" fill="#13a01e"/>
  <circle cx="29.6" cy="31.5" r="6.6" fill="none" stroke="#0d8717" stroke-width="0.8"/>
  <path d="M25.9 31.6 L28.6 34.3 L33.5 28.9" fill="none" stroke="#ffffff" stroke-width="1.9"/>
</g>
<g id="bdown">
  <circle cx="29.6" cy="31.3" r="7.5" fill="#ffffff" stroke="#c4c4c4" stroke-width="0.9"/>
  <path d="M27.8 27.2 H31.5 V30.7 H34 L29.65 35.9 L25.3 30.7 H27.8 Z" fill="#d9131c"/>
</g>
<g id="spk">
  <path d="M2.8 7.3 L11.8 4.1 L29.8 9.5 L21.7 13.2 Z" fill="#cfd1d2"/>
  <path d="M21.7 13.2 L29.8 9.5 L29.8 31 L21.7 35.2 Z" fill="#b6b8b9"/>
  <path d="M2.8 7.3 L21.7 13.2 L21.7 35.2 L2.8 30.5 Z" fill="#8e9091"/>
  <path d="M4 9.4 L20.5 14.5 L20.5 33.3 L4 29.2 Z" fill="#9a9c9d"/>
  <ellipse cx="11.6" cy="21" rx="6.1" ry="8.8" fill="#f4f5f5" transform="rotate(-9 11.6 21)"/>
  <ellipse cx="11.8" cy="21" rx="5.2" ry="7.8" fill="#dcdfe0" transform="rotate(-9 11.8 21)"/>
  <ellipse cx="13.6" cy="21.2" rx="2.6" ry="4.4" fill="#c3c7c9" transform="rotate(-9 13.6 21.2)"/>
  <ellipse cx="14.4" cy="21.2" rx="1.3" ry="2.2" fill="#eceeee"/>
</g>
<g id="tv">
  <path d="M6.4 30.8 L10.4 28.6 L23.9 33 L19.6 35.6 Z" fill="#747474"/>
  <path d="M11 27 L15.5 28.2 L15.5 31.4 L11 30.2 Z" fill="#4a4a4a"/>
  <path d="M2 6.4 L31.7 15.9 L31.7 35.5 L2 26.4 Z" fill="#262626"/>
  <path d="M3.1 8.1 L30.5 16.9 L30.5 33.8 L3.1 25.3 Z" fill="#5b5b5b"/>
  <path d="M3.1 8.1 L22 14.2 L9 27.1 L3.1 25.3 Z" fill="#6b6b6b"/>
</g>
<g id="tvg">
  <path d="M6.4 30.8 L10.4 28.6 L23.9 33 L19.6 35.6 Z" fill="#c2c2c2"/>
  <path d="M11 27 L15.5 28.2 L15.5 31.4 L11 30.2 Z" fill="#aaaaaa"/>
  <path d="M2 6.4 L31.7 15.9 L31.7 35.5 L2 26.4 Z" fill="#8e8e8e"/>
  <path d="M2.9 7.9 L30.7 16.7 L30.7 34 L2.9 25.5 Z" fill="#a9a9a9"/>
  <path d="M2.9 7.9 L24 14.6 L9 27.4 L2.9 25.5 Z" fill="#bababa"/>
</g>
</defs></svg>
<svg class="b" style="left:22px;top:75px" width="44" height="42" viewBox="0 0 44 42"><use href="#hp"/><use href="#bphone"/></svg>
<svg class="b" style="left:22px;top:116px" width="44" height="42" viewBox="0 0 44 42"><use href="#spk"/><use href="#bdown"/></svg>
<svg class="b" style="left:22px;top:157px" width="44" height="42" viewBox="0 0 44 42"><use href="#hp"/><use href="#bcheck"/></svg>
<svg class="b" style="left:22px;top:198px" width="44" height="42" viewBox="0 0 44 42"><use href="#tv"/></svg>
<svg class="b" style="left:22px;top:239px" width="44" height="42" viewBox="0 0 44 42"><use href="#tvg"/><use href="#bdown" transform="translate(0,-0.2)"/></svg>

<!-- buttons -->
<div class="btn dis" style="left:17.8px;top:297.2px;width:56.7px"></div>
<div class="btn" style="left:162.2px;top:297.2px;width:67.7px"></div>
<div class="b" style="left:219px;top:299.6px;width:1px;height:11.6px;background:#444"></div>
<svg class="b" style="left:221.2px;top:303.2px" width="7" height="5" viewBox="0 0 7 5"><path d="M0.2 0.3 H6.6 L3.4 4.6 Z" fill="#1a1a1a"/></svg>
<div class="btn" style="left:236.3px;top:297.2px;width:56.7px"></div>
<div class="btn" style="left:121.8px;top:329.2px;width:56.2px;height:15.7px;border:1.6px solid #0078d7"></div>
<div class="btn" style="left:184.2px;top:329.2px;width:56.7px;height:15.7px"></div>
<div class="btn dis" style="left:247.1px;top:329.2px;width:56.8px;height:15.7px"></div>
<span class="t" style="left:22.90px;top:7.87px;font-size:9.6px;color:#ffffff;transform:scaleX(0.9622)">Sound</span>
<span class="t" style="left:10.60px;top:33.08px;font-size:9px;color:#111111;transform:scaleX(0.9225)">Playback</span>
<span class="t" style="left:52.50px;top:34.48px;font-size:9px;color:#111111;transform:scaleX(0.9286)">Recording</span>
<span class="t" style="left:99.40px;top:34.48px;font-size:9px;color:#111111;transform:scaleX(0.9040)">Sounds</span>
<span class="t" style="left:135.50px;top:34.48px;font-size:9px;color:#111111;transform:scaleX(0.8996)">Communications</span>
<span class="t" style="left:17.40px;top:55.86px;font-size:9.5px;color:#1a1a1a;transform:scaleX(0.9392)">Select a playback device below to modify its settings:</span>
<span class="t" style="left:68.30px;top:82.39px;font-size:8.4px;color:#111111;-webkit-text-stroke:0.3px #111111;transform:scaleX(1.0758)">Headphones</span>
<span class="t" style="left:68.30px;top:92.44px;font-size:8.4px;color:#8d949c;-webkit-text-stroke:0.1px #8d949c;transform:scaleX(1.0218)">2- Shure MV7</span>
<span class="t" style="left:68.30px;top:102.49px;font-size:8.4px;color:#8d949c;-webkit-text-stroke:0.1px #8d949c;transform:scaleX(1.0573)">Default Communications Device</span>
<span class="t" style="left:68.30px;top:123.19px;font-size:8.4px;color:#111111;-webkit-text-stroke:0.3px #111111;transform:scaleX(1.0031)">Speakers</span>
<span class="t" style="left:68.30px;top:133.24px;font-size:8.4px;color:#8e8e8e;-webkit-text-stroke:0.1px #8e8e8e;transform:scaleX(1.1014)">High Definition Audio Device</span>
<span class="t" style="left:68.30px;top:143.29px;font-size:8.4px;color:#8e8e8e;-webkit-text-stroke:0.1px #8e8e8e;transform:scaleX(1.1349)">Not plugged in</span>
<span class="t" style="left:68.30px;top:164.19px;font-size:8.4px;color:#111111;-webkit-text-stroke:0.3px #111111;transform:scaleX(1.0758)">Headphones</span>
<span class="t" style="left:68.30px;top:174.24px;font-size:8.4px;color:#8e8e8e;-webkit-text-stroke:0.1px #8e8e8e;transform:scaleX(1.1004)">High Definition Audio Device</span>
<span class="t" style="left:68.30px;top:184.29px;font-size:8.4px;color:#8e8e8e;-webkit-text-stroke:0.1px #8e8e8e;transform:scaleX(1.0538)">Default Device</span>
<span class="t" style="left:68.30px;top:205.09px;font-size:8.4px;color:#111111;-webkit-text-stroke:0.3px #111111;transform:scaleX(1.0031)">Speakers</span>
<span class="t" style="left:68.30px;top:215.14px;font-size:8.4px;color:#8e8e8e;-webkit-text-stroke:0.1px #8e8e8e;transform:scaleX(1.0222)">NVIDIA Broadcast</span>
<span class="t" style="left:68.30px;top:225.19px;font-size:8.4px;color:#8e8e8e;-webkit-text-stroke:0.1px #8e8e8e;transform:scaleX(1.0075)">Ready</span>
<span class="t" style="left:68.30px;top:245.99px;font-size:8.4px;color:#111111;-webkit-text-stroke:0.3px #111111;transform:scaleX(1.0867)">NVIDIA Output</span>
<span class="t" style="left:68.30px;top:256.04px;font-size:8.4px;color:#8e8e8e;-webkit-text-stroke:0.1px #8e8e8e;transform:scaleX(1.1000)">NVIDIA High Definition Audio</span>
<span class="t" style="left:68.30px;top:266.09px;font-size:8.4px;color:#8e8e8e;-webkit-text-stroke:0.1px #8e8e8e;transform:scaleX(1.1349)">Not plugged in</span>
<span class="t" style="left:25.20px;top:301.78px;font-size:9px;color:#858585;transform:scaleX(1.0428)">Configure</span>
<span class="t" style="left:168.00px;top:301.78px;font-size:9px;color:#111111;transform:scaleX(1.0038)">Set Default</span>
<span class="t" style="left:243.80px;top:301.78px;font-size:9px;color:#111111;transform:scaleX(0.9919)">Properties</span>
<span class="t" style="left:143.50px;top:333.08px;font-size:9px;color:#111111;transform:scaleX(0.9373)">OK</span>
<span class="t" style="left:198.90px;top:333.08px;font-size:9px;color:#111111;transform:scaleX(0.9209)">Cancel</span>
<span class="t" style="left:264.40px;top:333.08px;font-size:9px;color:#9a9a9a;transform:scaleX(0.9638)">Apply</span>
</div>

</body></html>
